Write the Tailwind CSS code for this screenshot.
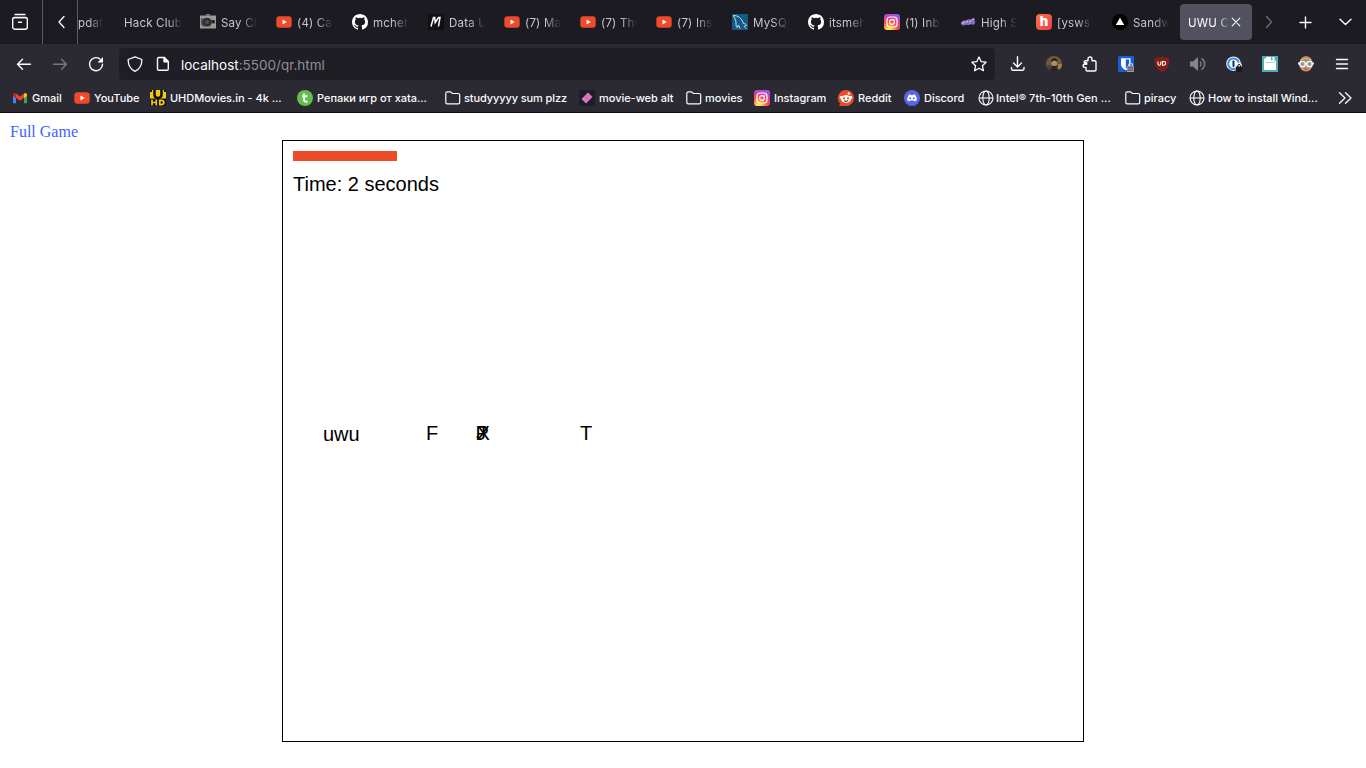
<!DOCTYPE html>
<html lang="en">
<head>
<meta charset="utf-8">
<title>UWU Challenge</title>
<script src="https://cdn.jsdelivr.net/npm/@tailwindcss/browser@4"></script>
</head>
<body class="w-[1366px] h-[768px] overflow-hidden bg-white flex flex-col font-['Inter',sans-serif] text-[#fbfbfe]">
<svg class="absolute size-0">
  <defs>
  <radialGradient id="igw" cx=".3" cy="1.05" r="1.1"><stop offset="0" stop-color="#fd5"/><stop offset=".15" stop-color="#fd5"/><stop offset=".5" stop-color="#ff543e"/><stop offset=".8" stop-color="#d63bb0"/><stop offset="1" stop-color="#8a5cf0"/></radialGradient>
  </defs>
  <symbol id="yt" viewBox="0 0 16 16"><rect x=".3" y="2.3" width="15.4" height="11.4" rx="3.2" fill="#ef4a2b"/><path d="M6.500 5.600v4.800L10.700 8z" fill="#fff"/></symbol>
  <symbol id="gh" viewBox="0 0 16 16"><path fill="#fff" d="M8 0C3.58 0 0 3.58 0 8c0 3.54 2.29 6.53 5.47 7.59.4.07.55-.17.55-.38 0-.19-.01-.82-.01-1.49-2.01.37-2.53-.49-2.69-.94-.09-.23-.48-.94-.82-1.13-.28-.15-.68-.52-.01-.53.63-.01 1.08.58 1.23.82.72 1.21 1.87.87 2.33.66.07-.52.28-.87.51-1.07-1.78-.2-3.64-.89-3.64-3.95 0-.87.31-1.59.82-2.15-.08-.2-.36-1.02.08-2.12 0 0 .67-.21 2.2.82a7.6 7.6 0 0 1 4 0c1.53-1.04 2.2-.82 2.2-.82.44 1.1.16 1.92.08 2.12.51.56.82 1.27.82 2.15 0 3.07-1.87 3.75-3.65 3.95.29.25.54.73.54 1.48 0 1.07-.01 1.93-.01 2.2 0 .21.15.46.55.38A8.01 8.01 0 0 0 16 8c0-4.42-3.58-8-8-8z"/></symbol>
  <symbol id="ig" viewBox="0 0 16 16"><rect width="16" height="16" rx="3" fill="url(#igw)"/><rect x="3" y="3" width="10" height="10" rx="3" fill="none" stroke="#fff" stroke-width="1.2"/><circle cx="8" cy="8" r="2.4" fill="none" stroke="#fff" stroke-width="1.2"/><circle cx="10.9" cy="5.1" r=".7" fill="#fff"/></symbol>
  <symbol id="folder" viewBox="0 0 16 16"><path d="M.8 12.4V3.4a1.5 1.5 0 0 1 1.5-1.5h2.9c.5 0 .8.2 1.1.5l1 1.1h5.9a1.5 1.5 0 0 1 1.5 1.5v7.4a1.4 1.4 0 0 1-1.4 1.4H2.2a1.4 1.4 0 0 1-1.4-1.4z" fill="none" stroke="#fbfbfe" stroke-width="1.2"/></symbol>
  <symbol id="globe" viewBox="0 0 16 16"><g fill="none" stroke="#fbfbfe" stroke-width="1.1"><circle cx="8" cy="8" r="7"/><ellipse cx="8" cy="8" rx="3.2" ry="7"/><path d="M1 8h14"/></g></symbol>
</svg>

<!-- Tab strip -->
<div class="h-11 shrink-0 bg-[#1c1b22] flex items-center text-[11.500px] tracking-[0.2px] text-[#c6c6cb]">
  <div class="w-[43px] h-full border-r border-[#5b5b66] flex items-center justify-center pr-[2px]">
    <svg class="size-[18px]" viewBox="0 0 18 18" fill="none" stroke="#fbfbfe" stroke-width="1.4" stroke-linecap="round"><path d="M4 1.500h10" /><rect x="1.700" y="4.500" width="14.600" height="11.700" rx="2"/><path d="M2.500 4.600h13M7.500 9.200h3"/></svg>
  </div>
  <div class="w-[35px] h-full border-r border-[#5b5b66] flex items-center justify-center">
    <svg class="size-4 ml-[3px]" viewBox="0 0 16 16" fill="none" stroke="#fbfbfe" stroke-width="1.3" stroke-linecap="round" stroke-linejoin="round"><path d="M10 2.500L5 8l5 5.500"/></svg>
  </div>
  <div class="w-[38px] shrink-0 overflow-hidden whitespace-nowrap pt-[3px]"><span class="block w-[25px] overflow-hidden [mask-image:linear-gradient(to_left,transparent,black_14px)]">pdate</span></div>
  <div class="w-[76px] shrink-0 pl-2 pt-[3px]"><span class="block w-[58px] overflow-hidden whitespace-nowrap [mask-image:linear-gradient(to_left,transparent,black_14px)]">Hack Club</span></div>

  <div class="w-[76px] shrink-0 pl-2 flex items-center gap-[5px]">
    <svg class="size-4 shrink-0" viewBox="0 0 16 16"><rect y="1.500" width="16" height="13" fill="#9a9a96"/><rect x="6" y="0" width="4" height="2" fill="#777"/><path d="M1 4.500h9l2 2h3v3h-3l-2 3H3l-2-2z" fill="#4c4d4c"/><circle cx="7" cy="8" r="4.300" fill="#2c2d33"/><circle cx="7" cy="8" r="2" fill="#485058"/><rect x="12" y="6" width="2.500" height="3" fill="#222"/></svg>
    <span class="mt-[3px] w-[36px] overflow-hidden whitespace-nowrap [mask-image:linear-gradient(to_left,transparent,black_16px)]">Say Ch</span>
  </div>
  <div class="w-[76px] shrink-0 pl-2 flex items-center gap-[5px]"><svg class="size-4 shrink-0"><use href="#yt"/></svg><span class="mt-[3px] w-[36px] overflow-hidden whitespace-nowrap [mask-image:linear-gradient(to_left,transparent,black_16px)]">(4) Ca</span></div>
  <div class="w-[76px] shrink-0 pl-2 flex items-center gap-[5px]"><svg class="size-4 shrink-0"><use href="#gh"/></svg><span class="mt-[3px] w-[36px] overflow-hidden whitespace-nowrap [mask-image:linear-gradient(to_left,transparent,black_16px)]">mcheh</span></div>
  <div class="w-[76px] shrink-0 pl-2 flex items-center gap-[5px]">
    <svg class="size-4 shrink-0" viewBox="0 0 16 16"><rect width="16" height="16" fill="#101014"/><path d="M3 12.500L5.500 3.500h1.200l.5 5 3.300-5H12L10.500 12.500" fill="none" stroke="#fff" stroke-width="1.500"/></svg>
    <span class="mt-[3px] w-[36px] overflow-hidden whitespace-nowrap [mask-image:linear-gradient(to_left,transparent,black_16px)]">Data U</span></div>
  <div class="w-[76px] shrink-0 pl-2 flex items-center gap-[5px]"><svg class="size-4 shrink-0"><use href="#yt"/></svg><span class="mt-[3px] w-[36px] overflow-hidden whitespace-nowrap [mask-image:linear-gradient(to_left,transparent,black_16px)]">(7) Ma</span></div>
  <div class="w-[76px] shrink-0 pl-2 flex items-center gap-[5px]"><svg class="size-4 shrink-0"><use href="#yt"/></svg><span class="mt-[3px] w-[36px] overflow-hidden whitespace-nowrap [mask-image:linear-gradient(to_left,transparent,black_16px)]">(7) The</span></div>
  <div class="w-[76px] shrink-0 pl-2 flex items-center gap-[5px]"><svg class="size-4 shrink-0"><use href="#yt"/></svg><span class="mt-[3px] w-[36px] overflow-hidden whitespace-nowrap [mask-image:linear-gradient(to_left,transparent,black_16px)]">(7) Ins</span></div>
  <div class="w-[76px] shrink-0 pl-2 flex items-center gap-[5px]">
    <svg class="size-4 shrink-0" viewBox="0 0 16 16"><rect width="16" height="16" fill="#145a87"/><path d="M1.500 1.500C6 1.500 9.500 4 11.500 9.500c1.500 0 2.500.8 3 2-1.200-.2-2 .2-2.200.8L14 14.500M1.500 1.500C2 4 4 5.500 4 8.500c0 2.500 0 4 1 5l1.500-2.500 1.500 3.500" fill="none" stroke="#d5e6f0" stroke-width="1"/></svg>
    <span class="mt-[3px] w-[36px] overflow-hidden whitespace-nowrap [mask-image:linear-gradient(to_left,transparent,black_16px)]">MySQL</span></div>
  <div class="w-[76px] shrink-0 pl-2 flex items-center gap-[5px]"><svg class="size-4 shrink-0"><use href="#gh"/></svg><span class="mt-[3px] w-[36px] overflow-hidden whitespace-nowrap [mask-image:linear-gradient(to_left,transparent,black_16px)]">itsmeh</span></div>
  <div class="w-[76px] shrink-0 pl-2 flex items-center gap-[5px]"><svg class="size-4 shrink-0"><use href="#ig"/></svg><span class="mt-[3px] w-[36px] overflow-hidden whitespace-nowrap [mask-image:linear-gradient(to_left,transparent,black_16px)]">(1) Inb</span></div>
  <div class="w-[76px] shrink-0 pl-2 flex items-center gap-[5px]">
    <svg class="size-4 shrink-0" viewBox="0 0 16 16"><path d="M.5 9.500L3 6.500l3-.2L8.500 5l2 .5 3.500-2 .8 2.500.5 3-1.800 2-2.500-.7-3 .9-2-.5-3.500 1z" fill="#7d63b8"/><path d="M2 9.300l2.500-1.500M6 8.500l2-1.500M9.500 8l2-1.500M12.500 5.800l1.300-.8" stroke="#f0b4e2" stroke-width="1.400"/><path d="M4 10.300l2-.5M8.500 10l2-.8M12.500 9.300h1.500" stroke="#74a0ee" stroke-width="1.100"/></svg>
    <span class="mt-[3px] w-[36px] overflow-hidden whitespace-nowrap [mask-image:linear-gradient(to_left,transparent,black_16px)]">High S</span></div>
  <div class="w-[76px] shrink-0 pl-2 flex items-center gap-[5px]">
    <span class="size-4 shrink-0 rounded bg-gradient-to-br from-[#ff7340] to-[#ec3750] text-white font-black text-[13px] leading-[15px] text-center tracking-normal">h</span>
    <span class="mt-[3px] w-[36px] overflow-hidden whitespace-nowrap [mask-image:linear-gradient(to_left,transparent,black_16px)]">[ysws]</span></div>
  <div class="w-[76px] shrink-0 pl-2 flex items-center gap-[5px]">
    <svg class="size-4 shrink-0" viewBox="0 0 16 16"><circle cx="8" cy="8" r="8" fill="#000"/><path d="M8 3.800l4.200 7.200H3.800z" fill="#fff"/></svg>
    <span class="mt-[3px] w-[36px] overflow-hidden whitespace-nowrap [mask-image:linear-gradient(to_left,transparent,black_16px)]">Sandw</span></div>
  <div class="w-[72px] h-9 shrink-0 rounded bg-[#52525e] text-[#fbfbfe] pl-2 flex items-center">
    <span class="mt-[3px] w-[41px] overflow-hidden whitespace-nowrap [mask-image:linear-gradient(to_left,transparent,black_10px)]">UWU Ch</span>
    <svg class="size-[14px]" viewBox="0 0 14 14" stroke="#fbfbfe" stroke-width="1.100" stroke-linecap="round"><path d="M3.200 3.200l7.600 7.600M10.800 3.200l-7.600 7.600"/></svg>
  </div>
  <div class="flex-1 flex items-center pl-[9px]">
    <svg class="size-4 shrink-0" viewBox="0 0 16 16" fill="none" stroke="#6f6f78" stroke-width="1.300" stroke-linecap="round" stroke-linejoin="round"><path d="M5.500 2.500L10.500 8l-5 5.500"/></svg>
    <svg class="size-4 shrink-0 ml-5" viewBox="0 0 16 16" stroke="#fbfbfe" stroke-width="1.400" stroke-linecap="round"><path d="M8.500 3v11M3 8.500h11"/></svg>
    <svg class="size-4 shrink-0 ml-6" viewBox="0 0 16 16" fill="none" stroke="#fbfbfe" stroke-width="1.400" stroke-linecap="round" stroke-linejoin="round"><path d="M3 5.200l5.500 5.300L14 5.200"/></svg>
  </div>
</div>

<!-- Navigation toolbar -->
<div class="h-10 shrink-0 bg-[#2b2a33] flex items-center pl-4">
  <svg class="size-4" viewBox="0 0 16 16" fill="none" stroke="#fbfbfe" stroke-width="1.400" stroke-linecap="round" stroke-linejoin="round"><path d="M1.500 8.300h13M6.500 3.300l-5 5 5 5"/></svg>
  <svg class="size-4 ml-5" viewBox="0 0 16 16" fill="none" stroke="#77767e" stroke-width="1.400" stroke-linecap="round" stroke-linejoin="round"><path d="M1.500 8.300h13M9.500 3.300l5 5-5 5"/></svg>
  <svg class="size-4 ml-5" viewBox="0 0 16 16" fill="none" stroke="#fbfbfe" stroke-width="1.400" stroke-linecap="round"><path d="M14.500 8.300A6.500 6.500 0 1 1 11.800 2.900"/><path d="M15 1v5.500H9.500z" fill="#fbfbfe" stroke="none"/></svg>
  <div class="ml-[15px] w-[876px] h-8 rounded bg-[#1f1e25] flex items-center pl-2 pr-2">
    <svg class="size-4" viewBox="0 0 16 16" fill="none" stroke="#fbfbfe" stroke-width="1.300" stroke-linejoin="round"><path d="M8 .8l6.800 2.700C15 9 12.500 13 8 15.300 3.500 13 1 9 1.200 3.500z"/></svg>
    <svg class="size-4 ml-3" viewBox="0 0 16 16" fill="none" stroke="#fbfbfe" stroke-width="1.400" stroke-linejoin="round"><path d="M3.800 1.500h5.500l4 4V13a1.300 1.300 0 0 1-1.300 1.300H3.800A1.300 1.300 0 0 1 2.500 13V2.800a1.300 1.300 0 0 1 1.300-1.300z"/><path d="M9 1.500v4.300h4.300z" fill="#fbfbfe"/></svg>
    <span class="ml-[10px] text-[13.500px] mt-[3px] text-[#8f8f96] whitespace-nowrap"><span class="text-[#fbfbfe]">localhost</span>:5500/qr.html</span>
    <svg class="size-4 ml-auto" viewBox="0 0 16 16" fill="none" stroke="#fbfbfe" stroke-width="1.300" stroke-linejoin="round"><path d="M8 1l2.100 4.600 5 .6-3.700 3.500 1 5L8 12.200l-4.400 2.500 1-5L.9 6.200l5-.6z"/></svg>
  </div>
  <div class="ml-[15px] flex items-center gap-5">
    <svg class="size-4" viewBox="0 0 16 16" fill="none" stroke="#fbfbfe" stroke-width="1.400" stroke-linecap="round" stroke-linejoin="round"><path d="M7.500 .8v10M3.500 7l4 4 4-4M1.500 11.500v1.200a1.500 1.500 0 0 0 1.500 1.500h9.500a1.500 1.500 0 0 0 1.500-1.500v-1.200"/></svg>
    <svg class="size-4" viewBox="0 0 16 16"><clipPath id="av"><circle cx="8" cy="8" r="8"/></clipPath><g clip-path="url(#av)"><rect width="16" height="16" fill="#6e5a3c"/><path d="M0 9h16v7H0z" fill="#4a4338"/><path d="M12 8h4v5h-4z" fill="#a87f3c"/><ellipse cx="8.300" cy="7.500" rx="2.900" ry="4" fill="#b08a70"/><path d="M5 6c0-5 6.500-5 6.500 0-2-2-4-2-6.500 0z" fill="#211b18"/><path d="M5.800 9.300c1 1 4 1 5 0v2.500l-2.500 1-2.500-1zM2 16c0-5 11-5 12 0z" fill="#2a2522"/></g></svg>
    <svg class="size-4" viewBox="0 0 16 16" fill="none" stroke="#fbfbfe" stroke-width="1.400" stroke-linejoin="round"><path d="M2.200 6.800V6a1.300 1.300 0 0 1 1.300-1.300H6V3a2 2 0 0 1 4 0v1.700h2.700A1.300 1.300 0 0 1 14 6v7.700a1.300 1.300 0 0 1-1.300 1.300H5.300A1.300 1.300 0 0 1 4 13.700v-2.300H2.700a1.500 1.500 0 0 1 0-3.200h2V6.800z"/></svg>
    <svg class="size-4" viewBox="0 0 16 16"><rect width="16" height="16" rx="1.500" fill="#175ddc"/><path d="M3 2.200h9.500v6c0 3-2.500 4.800-4.700 6C5.500 13 3 11.200 3 8.200z" fill="#fff"/><path d="M7.800 3.600h3.300v4.500c0 2-1.500 3.400-3.300 4.500z" fill="#175ddc"/><path d="M10.700 10.500V9.200a1.900 1.900 0 0 1 3.800 0v1.300" fill="none" stroke="#ccc" stroke-width="1.200"/><rect x="9" y="10" width="7" height="6" rx="1" fill="#b4b4b4"/><rect x="9.600" y="10.700" width="5.800" height="4.500" fill="#55555a"/><path d="M10 12.200h5M10 13.800h5" stroke="#aaa" stroke-width=".7"/></svg>
    <svg class="size-4" viewBox="0 0 16 16"><path d="M8 0c2 1.500 4.500 2 7 2v5c0 4.500-3.500 7.500-7 9-3.500-1.500-7-4.500-7-9V2c2.500 0 5-.5 7-2z" fill="#831f14"/><path d="M4 5.500v2.300a1.400 1.400 0 0 0 2.800 0V5.500M8.500 5.500v3.700h1.300a1.850 1.850 0 0 0 0-3.700z" fill="none" stroke="#fff" stroke-width="1.100"/></svg>
    <svg class="size-4" viewBox="0 0 16 16"><path d="M0 5.500h3L8 1v14l-5-4.500H0z" fill="#85858a"/><path d="M10 5.500c1.300 1.300 1.300 3.700 0 5M11.500 2.500c4.200 2.500 4.200 8.500 0 11" fill="none" stroke="#77777c" stroke-width="1.500"/></svg>
    <svg class="size-4" viewBox="0 0 16 16"><circle cx="7.500" cy="7.700" r="7.300" fill="#eef3f8"/><circle cx="7.500" cy="7.700" r="5.300" fill="#fff" stroke="#3b8df0" stroke-width="2"/><rect x="6.500" y="4.500" width="2" height="6.500" rx=".8" fill="#1d2a3d"/><path d="M11.300 11V9.500a1.700 1.700 0 0 1 3.400 0V11" fill="none" stroke="#eee" stroke-width="2.400"/><path d="M11.600 11V9.600a1.500 1.500 0 0 1 2.900 0V11" fill="none" stroke="#222"/><rect x="10" y="10.500" width="6" height="5.500" rx=".5" fill="#1a1a1e"/></svg>
    <svg class="size-4" viewBox="0 0 16 16"><path d="M0 0h16v16H0z" fill="#4fb0b3"/><rect x="4" y="1" width="8.500" height="5" fill="#fff"/><rect x="9" y="1" width="1.500" height="3.500" fill="#4fb0b3"/><path d="M2 2.500v11.500h12V5.500l-1.500-2V6.500H4V2.500z" fill="#fff"/></svg>
    <svg class="size-4" viewBox="0 0 16 16"><ellipse cx="8" cy="8" rx="6.800" ry="7.600" fill="#d4926c"/><path d="M1.500 7C2 1 6 .2 8 .2S14 1 14.500 7z" fill="#b98a60"/><path d="M3 4l5-2 5 2" stroke="#dcb58a" fill="none"/><path d="M0 7.500h16" stroke="#f2f2f2" stroke-width="2"/><circle cx="4.500" cy="8" r="2.700" fill="#7ba3ad" stroke="#f6f6f6" stroke-width="1.300"/><circle cx="11.500" cy="8" r="2.700" fill="#7ba3ad" stroke="#f6f6f6" stroke-width="1.300"/><path d="M6.500 13h3" stroke="#8d4b37"/></svg>
    <svg class="size-4" viewBox="0 0 16 16" stroke="#fbfbfe" stroke-width="1.400" stroke-linecap="round"><path d="M2.500 3.500h11M2.500 8h11M2.500 12.500h11"/></svg>
  </div>
</div>

<!-- Bookmarks bar -->
<div class="h-[29px] shrink-0 bg-[#2b2a33] border-b border-[#0c0c0d] flex items-center pl-3 text-[11px] tracking-[-0.03px] font-medium whitespace-nowrap">
  <div class="w-[62px] shrink-0 flex items-center gap-1"><svg class="size-4" viewBox="0 0 16 16"><path d="M1 13.300V4l3 2.200v7.100z" fill="#4285f4"/><path d="M12 13.300V6.200L15 4v9.300z" fill="#34a853"/><path d="M12 6.200V3.500c1-1 3-.7 3 1.200v1.200l-3 2.400z" fill="#fbbc04"/><path d="M4 3.500l4 3 4-3v4.200l-4 3-4-3z" fill="#ea4335"/><path d="M1 5.900V4.700c0-1.900 2-2.200 3-1.200v4.700z" fill="#c5221f"/></svg><span>Gmail</span></div>
  <div class="w-[76px] shrink-0 flex items-center gap-1"><svg class="size-4"><use href="#yt"/></svg><span>YouTube</span></div>
  <div class="w-[147px] shrink-0 flex items-center gap-1"><svg class="size-4" viewBox="0 0 16 16"><rect width="16" height="16" fill="#f6c915"/><path d="M0 8.500h16V16H0z" fill="#111"/><path d="M4.500 0v5a3.500 3 0 0 0 7 0V0" fill="none" stroke="#111" stroke-width="2.600"/><path d="M0 0h2v2H0zM14 0h2v2h-2z" fill="#111"/><path d="M2 9.500v6M6.300 9.500v6M2 12.500h4.300M9.800 10.400H11c3.800 0 3.800 4.200 0 4.200H9.800z" fill="none" stroke="#f6c915" stroke-width="1.700"/></svg><span>UHDMovies.in - 4k ...</span></div>
  <div class="w-[148px] shrink-0 flex items-center gap-1"><svg class="size-4" viewBox="0 0 16 16"><circle cx="8" cy="8" r="8" fill="#62bf4b"/><path d="M7 3.500v6.300c0 1.600 1 2.200 3.500 1.900M5 6.300h5.500" stroke="#fff" stroke-width="2" fill="none"/></svg><span>Репаки игр от xata...</span></div>
  <div class="w-[134px] shrink-0 flex items-center gap-[3px]"><svg class="size-4"><use href="#folder"/></svg><span class="tracking-[-0.1px]">studyyyyy sum plzz</span></div>
  <div class="w-[107px] shrink-0 flex items-center gap-1"><svg class="size-4" viewBox="0 0 16 16"><rect width="16" height="16" rx="1" fill="#1b1d28"/><path d="M9 2.500l4.500 4.500-6.500 6.500L2.500 9z" fill="#d977bd"/><path d="M5.800 5.500l4.700 4.700" stroke="#a6478c" stroke-dasharray="1 1"/></svg><span>movie-web alt</span></div>
  <div class="w-[68px] shrink-0 flex items-center gap-[3px]"><svg class="size-4"><use href="#folder"/></svg><span>movies</span></div>
  <div class="w-[84px] shrink-0 flex items-center gap-1"><svg class="size-4"><use href="#ig"/></svg><span>Instagram</span></div>
  <div class="w-[66px] shrink-0 flex items-center gap-1"><svg class="size-4" viewBox="0 0 16 16"><path d="M8 0a8 8 0 1 1 0 16H1l1.300-2.400A8 8 0 0 1 8 0z" fill="#f04a23"/><circle cx="3.300" cy="7.300" r="1.600" fill="#fff"/><circle cx="12.700" cy="7.300" r="1.600" fill="#fff"/><circle cx="10.800" cy="3.500" r="1.200" fill="#fff"/><ellipse cx="8" cy="9" rx="5" ry="3.900" fill="#fff"/><circle cx="6" cy="8.300" r="1.100" fill="#f04a23"/><circle cx="10" cy="8.300" r="1.100" fill="#f04a23"/><path d="M6 10.700q2 1.300 4 0" stroke="#222" fill="none"/></svg><span>Reddit</span></div>
  <div class="w-[74px] shrink-0 flex items-center gap-1"><svg class="size-4" viewBox="0 0 16 16"><circle cx="8" cy="8" r="8" fill="#5865f2"/><path d="M5 4.700l1.500-.5.400.7h2.200l.4-.7 1.500.5c1.500 2 2 4 1.700 5.800l-2 1-.6-1H5.900l-.6 1-2-1C3 8.700 3.500 6.700 5 4.700z" fill="#fff"/><circle cx="6.200" cy="8.300" r="1" fill="#5865f2"/><circle cx="9.800" cy="8.300" r="1" fill="#5865f2"/></svg><span>Discord</span></div>
  <div class="w-[147px] shrink-0 flex items-center gap-[2px]"><svg class="size-4"><use href="#globe"/></svg><span class="tracking-[0.04px]">Intel® 7th-10th Gen ...</span></div>
  <div class="w-[64px] shrink-0 flex items-center gap-[3px]"><svg class="size-4"><use href="#folder"/></svg><span>piracy</span></div>
  <div class="w-[148px] shrink-0 flex items-center gap-[3px]"><svg class="size-4"><use href="#globe"/></svg><span class="tracking-[-0.06px]">How to install Wind...</span></div>
  <svg class="size-4 shrink-0" viewBox="0 0 16 16" fill="none" stroke="#fbfbfe" stroke-width="1.300" stroke-linecap="round" stroke-linejoin="round"><path d="M2.500 2.700L8 8l-5.500 5.300M8.500 2.700L14 8l-5.500 5.300"/></svg>
</div>

<!-- Page -->
<main class="flex-1 flex flex-col text-black">
  <a class="h-[27px] pl-[10px] pt-[9px] text-[16px] leading-[20px] font-['Liberation_Serif',serif] text-[#3c62ff]">Full Game</a>
  <div class="relative mx-auto w-[802px] h-[602px] border border-black pl-[10px] pt-[10px] font-['Liberation_Sans',sans-serif] text-[20px] leading-[23px]">
    <div class="w-[104px] h-[10px] bg-[#ec4d28]"></div>
    <p class="mt-[12px]">Time: 2 seconds</p>
    <!-- Falling-letter playfield -->
    <span class="absolute left-[40px] top-[282px]">uwu</span>
    <span class="absolute left-[143px] top-[281px]">F</span>
    <span class="absolute left-[192.500px] top-[281px]">P</span>
    <span class="absolute left-[193px] top-[281px]">J</span>
    <span class="absolute left-[193.500px] top-[281px]">X</span>
    <span class="absolute left-[297px] top-[281px]">T</span>
  </div>
</main>
</body>
</html>
